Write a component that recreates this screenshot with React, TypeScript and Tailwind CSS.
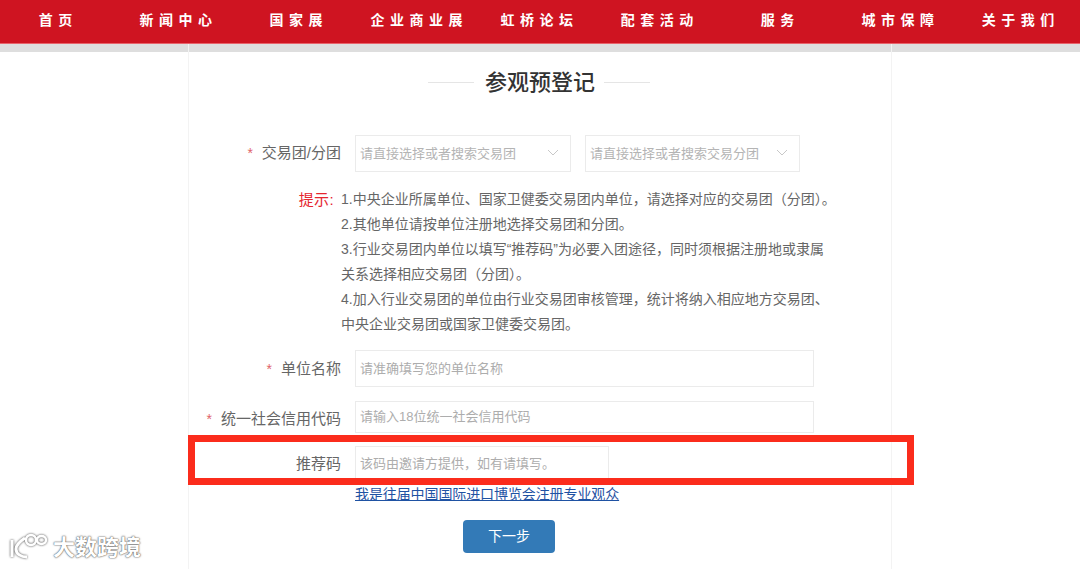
const NAV_ITEMS = ['首页', '新闻中心', '国家展', '企业商业展', '虹桥论坛', '配套活动', '服务', '城市保障', '关于我们'];

const HINTS = [
  '1.中央企业所属单位、国家卫健委交易团内单位，请选择对应的交易团（分团）。',
  '2.其他单位请按单位注册地选择交易团和分团。',
  '3.行业交易团内单位以填写“推荐码”为必要入团途径，同时须根据注册地或隶属',
  '关系选择相应交易团（分团）。',
  '4.加入行业交易团的单位由行业交易团审核管理，统计将纳入相应地方交易团、',
  '中央企业交易团或国家卫健委交易团。',
];

function Label({ text, required, offset = '' }: { text: string; required?: boolean; offset?: string }) {
  return (
    <div className={`w-[152px] shrink-0 flex justify-end items-center text-[15px] text-[#666] ${offset}`}>
      {required && <span className="text-[#e0646a] mr-[9px] text-[14px]">*</span>}
      <span>{text}</span>
    </div>
  );
}

function SelectBox({ placeholder, width }: { placeholder: string; width: string }) {
  return (
    <div className={`${width} h-[37px] border border-[#ebebeb] flex items-center justify-between pl-[4px] pr-[11px]`}>
      <span className="text-[13px] text-[#b4b4b4]">{placeholder}</span>
      <svg width="12" height="7" viewBox="0 0 12 7" fill="none" stroke="#c8c8c8" strokeWidth="1" className="mb-[2px]">
        <path d="M1 1l5 5 5-5" />
      </svg>
    </div>
  );
}

function TextBox({ placeholder, width, height }: { placeholder: string; width: string; height: string }) {
  return (
    <input
      readOnly
      placeholder={placeholder}
      className={`${width} ${height} border border-[#ebebeb] px-[4px] pb-[1px] text-[13px] outline-none placeholder:text-[#adadad]`}
    />
  );
}

export default function App() {
  return (
    <div className="relative w-[1080px] h-[569px] overflow-hidden bg-white font-['Liberation_Sans','Noto_Sans_CJK_SC',sans-serif]">
      <nav className="h-[44px] w-[1083px] -ml-[2px] bg-[#cf1421] border-b border-[#e8636c] grid grid-cols-9 items-center">
        {NAV_ITEMS.map((item) => (
          <a key={item} className="text-center text-[14px] font-bold text-white tracking-[5.5px] mb-[3px]">
            {item}
          </a>
        ))}
      </nav>
      <div className="h-[8px] bg-[#dedede]" />

      <main className="w-[704px] ml-[188px] border-x border-[#f3f3f3] h-[600px] -mt-[8px] pt-[8px]">
        <div className="flex items-center mt-[16px] ml-[239px]">
          <span className="w-[46px] h-px bg-[#e5e5e5] -mt-[2px]" />
          <h1 className="ml-[11px] mr-[9px] text-[22px] leading-[30px] font-medium text-[#333]">参观预登记</h1>
          <span className="w-[46px] h-px bg-[#e5e5e5] -mt-[2px]" />
        </div>

        <div className="flex mt-[37px]">
          <Label text="交易团/分团" required />
          <div className="flex gap-[14px] ml-[14px]">
            <SelectBox placeholder="请直接选择或者搜索交易团" width="w-[216px]" />
            <SelectBox placeholder="请直接选择或者搜索交易分团" width="w-[215px]" />
          </div>
        </div>

        <div className="flex mt-[15px]">
          <div className="w-[145px] shrink-0 text-right text-[15px] tracking-[0.4px] leading-[25px] text-[#e5262f]">提示:</div>
          <div className="ml-[7px] text-[14px] leading-[25px] text-[#666] whitespace-nowrap">
            {HINTS.map((line) => (
              <p key={line}>{line}</p>
            ))}
          </div>
        </div>

        <div className="flex mt-[13px]">
          <Label text="单位名称" required offset="pt-[2px]" />
          <div className="ml-[14px]">
            <TextBox placeholder="请准确填写您的单位名称" width="w-[459px]" height="h-[37px]" />
          </div>
        </div>

        <div className="flex mt-[14px]">
          <Label text="统一社会信用代码" required offset="pt-[4px]" />
          <div className="ml-[14px]">
            <TextBox placeholder="请输入18位统一社会信用代码" width="w-[459px]" height="h-[32px]" />
          </div>
        </div>

        <div className="flex mt-[13px]">
          <Label text="推荐码" offset="pt-[2px]" />
          <div className="ml-[14px]">
            <TextBox placeholder="该码由邀请方提供，如有请填写。" width="w-[254px]" height="h-[35px]" />
          </div>
        </div>

        <a className="block ml-[166px] mt-[1px] text-[14px] tracking-[-0.1px] leading-[24px] text-[#1f52a3] underline whitespace-nowrap">
          我是往届中国国际进口博览会注册专业观众
        </a>

        <button className="block ml-[274px] mt-[14px] w-[92px] h-[33px] rounded-[4px] bg-[#337ab7] text-white text-[14px]">
          下一步
        </button>
      </main>

      {/* annotation drawn over the form */}
      <div className="absolute left-[188px] top-[435px] w-[726px] h-[50px] border-[7px] border-[#fb2c1c]" />

      {/* watermark */}
      <div className="absolute left-[8px] top-[533px] flex items-center gap-[1px]">
        <svg width="44" height="30" viewBox="0 0 44 30" fill="none" stroke="#fff" strokeWidth="3" className="drop-shadow-[0_0_1px_#444]">
          <path d="M4 7v17" />
          <path d="M17 5C11 9 8 13 8 16c0 5 5 8 11 8" />
          <circle cx="23" cy="7" r="5" strokeWidth="2.5" />
          <ellipse cx="33.5" cy="7" rx="4.5" ry="4" strokeWidth="2.5" />
        </svg>
        <span className="text-[22px] leading-[30px] font-bold text-white [text-shadow:0_0_2px_#555,0_0_1px_#555]">大数跨境</span>
      </div>
    </div>
  );
}
